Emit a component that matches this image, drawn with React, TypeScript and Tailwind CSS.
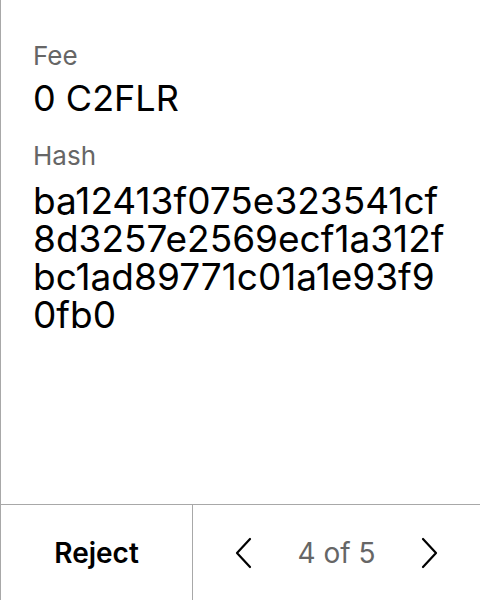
export default function App() {
  return (
    <div
      className="w-[480px] h-[600px] bg-white flex flex-col border-l border-[#a8a8a8] text-black"
      style={{ fontFamily: "Inter, 'Noto Sans', sans-serif" }}
    >
      <div className="flex-1 pl-8 pr-[31px] pt-[40px]">
        <div className="text-[26px] leading-8 text-[#666666]">Fee</div>
        <div className="text-[36px] leading-10 mt-1.5">0 C2FLR</div>
        <div className="text-[26px] leading-8 text-[#666666] mt-[22px]">Hash</div>
        <div className="text-[37px] leading-[38px] break-all mt-[10px]">
          ba12413f075e323541cf8d3257e2569ecf1a312fbc1ad89771c01a1e93f90fb0
        </div>
      </div>
      <div className="h-[96px] border-t border-[#a8a8a8] flex">
        <button className="w-[192px] border-r border-[#a8a8a8] text-[28px] font-semibold">
          Reject
        </button>
        <div className="flex-1 flex items-center justify-between px-[42px]">
          <svg width="17" height="32" viewBox="0 0 17 32" fill="none" stroke="black" strokeWidth="2.2" strokeLinecap="round" strokeLinejoin="round">
            <polyline points="15,2 2,16 15,30" />
          </svg>
          <span className="text-[28px] text-[#666666]">4 of 5</span>
          <svg width="17" height="32" viewBox="0 0 17 32" fill="none" stroke="black" strokeWidth="2.2" strokeLinecap="round" strokeLinejoin="round">
            <polyline points="2,2 15,16 2,30" />
          </svg>
        </div>
      </div>
    </div>
  );
}
